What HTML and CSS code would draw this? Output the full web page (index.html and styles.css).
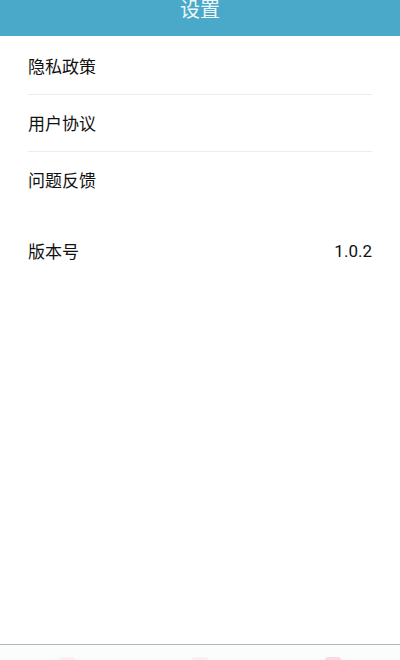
FILE: index.html
```html
<!DOCTYPE html>
<html lang="zh-CN">
<head>
<meta charset="utf-8">
<title>设置</title>
<link rel="stylesheet" href="styles.css">
</head>
<body>
<div class="app">
  <header class="topbar"><span class="title">设置</span></header>
  <main class="content">
    <ul class="list">
      <li class="row">隐私政策</li>
      <li class="row">用户协议</li>
      <li class="row last">问题反馈</li>
    </ul>
    <div class="row version"><span>版本号</span><span class="num">1.0.2</span></div>
  </main>
  <nav class="tabbar">
    <span class="tab"><i class="dot d1"></i></span>
    <span class="tab"><i class="dot d2"></i></span>
    <span class="tab"><i class="dot d3"></i></span>
  </nav>
</div>
</body>
</html>
```
FILE: styles.css
```css
* { box-sizing: border-box; }
html, body { margin: 0; padding: 0; background: #fff; }
body { font-family: "Noto Sans CJK SC", "Noto Sans", sans-serif; color: #111; }
.app { width: 400px; height: 660px; display: flex; flex-direction: column; overflow: hidden; }
.topbar {
  height: 36px; background: #4aa9c9; display: flex; justify-content: center;
  align-items: flex-end; overflow: hidden; flex: none;
}
.title { color: #eef8fb; font-size: 20px; line-height: 20px; margin-bottom: 17px; }
.content { flex: 1; padding: 2px 28px 0; }
.list { list-style: none; margin: 0; padding: 0; }
.row {
  height: 57px; line-height: 56px; font-size: 17px; border-bottom: 1px solid #ececec;
}
.row.last { border-bottom: none; height: 56px; }
.version {
  margin-top: 15px; border-bottom: none; display: flex; justify-content: space-between;
}
.num { font-family: Roboto, "Noto Sans", sans-serif; font-size: 17px; }
.tabbar {
  height: 16px; flex: none; border-top: 1px solid #a6babd; background: #fbfdfd;
  display: flex; align-items: flex-end;
}
.tab { flex: 1; display: flex; justify-content: center; }
.dot { display: block; width: 16px; height: 3px; border-radius: 8px 8px 0 0; background: #fcefef; }
.d3 { background: #fadadd; }
```
